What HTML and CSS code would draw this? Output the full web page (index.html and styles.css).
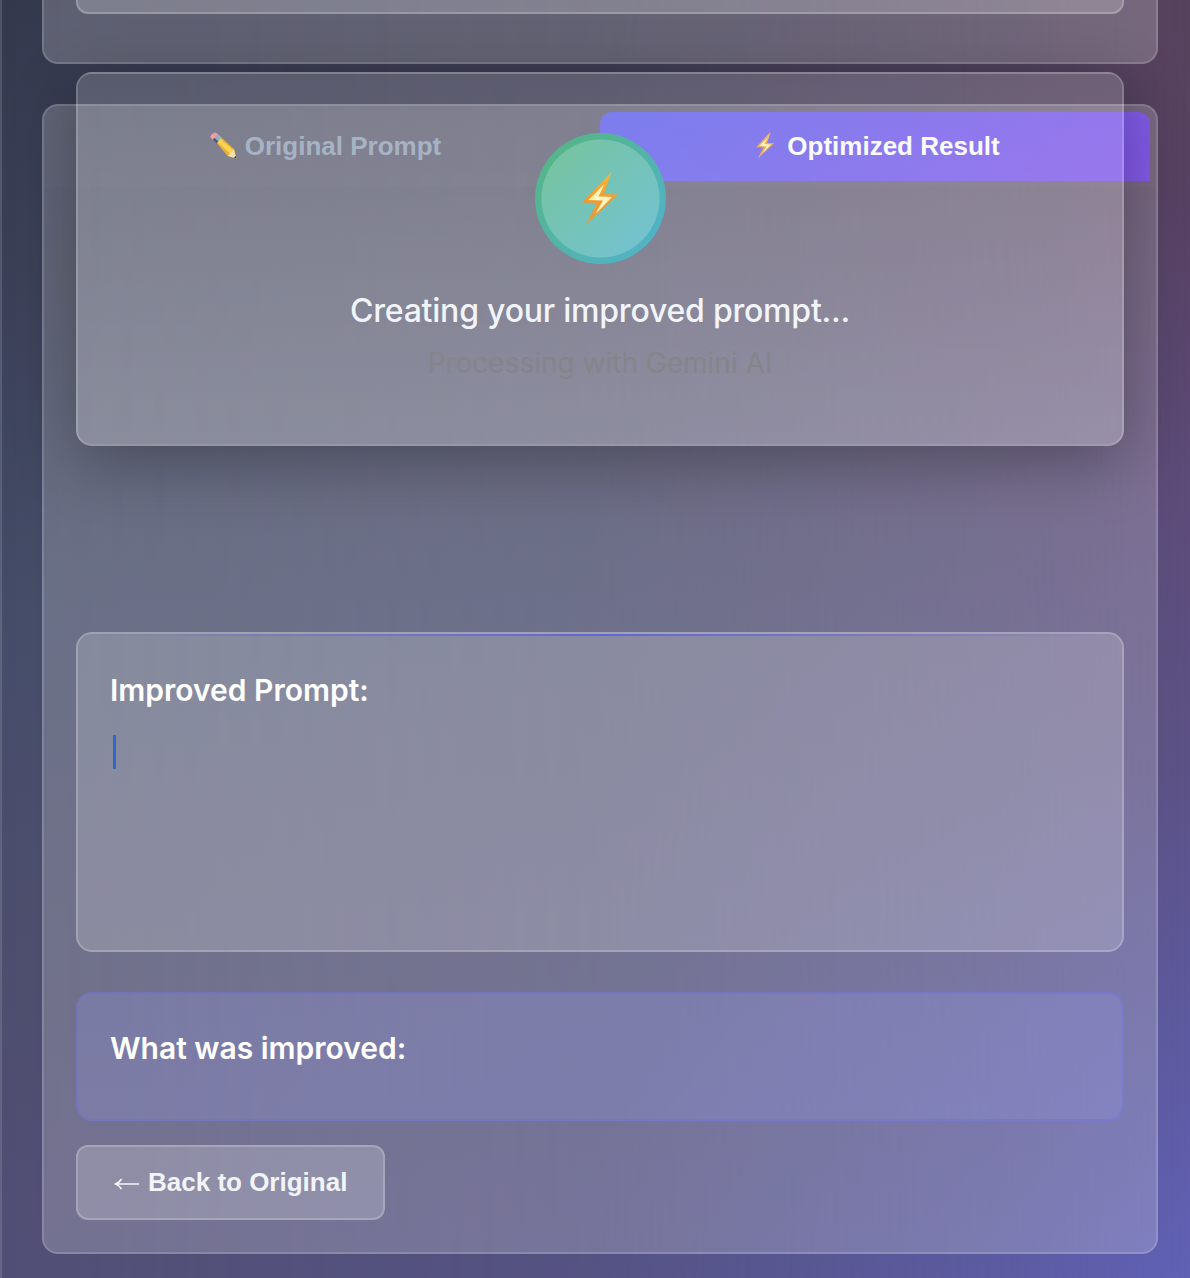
FILE: index.html
```html
<!DOCTYPE html>
<html lang="en">
<head>
<meta charset="utf-8">
<title>Prompt Optimizer</title>
<link rel="stylesheet" href="styles.css">
</head>
<body>
<svg width="0" height="0" class="defs" aria-hidden="true">
  <defs>
    <linearGradient id="bolt-edge" x1="0" y1="0" x2="0" y2="1">
      <stop offset="0" stop-color="#f5b83d"/><stop offset=".55" stop-color="#f09a32"/><stop offset="1" stop-color="#dca044"/>
    </linearGradient>
    <linearGradient id="bolt-core" x1="0" y1="0" x2="1" y2="1">
      <stop offset="0" stop-color="#ffd84a"/><stop offset=".45" stop-color="#fffbd2"/><stop offset="1" stop-color="#ffe88a"/>
    </linearGradient>
    <symbol id="bolt" viewBox="0 0 38 54">
      <path d="M30.500 0 1 30.500l15 .5L4.500 53 37.500 22.500 23 22z" fill="url(#bolt-edge)"/>
      <path d="M23.500 12 7.500 28l14.500.5-8 14L31 25l-13.500-.5z" fill="url(#bolt-core)"/>
    </symbol>
    <symbol id="pencil" viewBox="0 0 28 28">
      <path d="M6.500 9.500 10.500 3.800 25.500 17.500 27.500 26.500 18.500 24z" fill="#e0a010"/>
      <path d="m7.500 9 2.500-3.500L25 19l-3 3.500z" fill="#fccb2c"/>
      <path d="m19 24 5.500-6.800 3 9.300z" fill="#f0d9a8"/>
      <path d="m25 25.700 1.700-2 .8 2.800z" fill="#111"/>
      <path d="m3.500 6.500 4.800-5 4.200 4-5 5.500z" fill="#7f9cc0"/>
      <path d="m4 7.500 3.500 3.800 1.800-2-3.800-3.300z" fill="#2e3244"/>
      <path d="M1.500 5.800C.2 4.200 4.500.2 6.500.4l2.200 1.800-5 5.200z" fill="#f08a8c"/>
    </symbol>
  </defs>
</svg>
<main class="page">
  <section class="card card-top"><div class="field"></div></section>

  <section class="card card-result">
    <nav class="tabs">
      <button class="tab"><svg class="ico-pencil"><use href="#pencil"/></svg><span>Original Prompt</span></button>
      <button class="tab tab-active"><svg class="ico-bolt"><use href="#bolt"/></svg><span>Optimized Result</span></button>
    </nav>
    <div class="content">
      <div class="panel improved">
        <h3>Improved Prompt:</h3>
        <div class="cursor"></div>
      </div>
      <div class="panel changes"><h3>What was improved:</h3></div>
      <button class="back">
        <svg class="arrow" viewBox="0 0 26 14"><path d="M25 7H2M7.500 2Q5.500 5.500 1.500 7 5.500 8.500 7.500 12"/></svg><span>Back to Original</span>
      </button>
    </div>
  </section>

  <div class="loading">
    <div class="badge"><svg><use href="#bolt"/></svg></div>
    <p class="status">Creating your improved prompt...</p>
    <p class="sub">Processing with Gemini AI</p>
  </div>
</main>
</body>
</html>
```
FILE: styles.css
```css
* { box-sizing: border-box; }
html, body { margin: 0; height: 1278px; overflow: hidden; }
body {
  font-family: Inter, "Liberation Sans", sans-serif;
  background: linear-gradient(#35394e, #3b4057 20%, #454d69 48%, #4d4e6d 72%, #524f76);
}
body::before {
  content: "";
  position: absolute;
  inset: 0;
  background: linear-gradient(#57435d, #584263 15%, #5d4b79 38%, #5c5286 60%, #5d589a 76%, #6161b6);
  mask-image: linear-gradient(to right, transparent, rgba(0,0,0,.22) 50%, rgba(0,0,0,.7) 85%, #000);
}
.defs { position: absolute; }
h3, p { margin: 0; }
button { border: 0; background: none; font-family: "Liberation Sans", Arial, sans-serif; font-weight: 700; font-size: 26px; line-height: 30px; }
.page {
  position: relative;
  height: 1278px;
  padding: 0 32px 0 40px;
  border-left: 2px solid rgba(255,255,255,.13);
}
.card {
  border: 2px solid rgba(255,255,255,.15);
  border-radius: 16px;
  background: rgba(255,255,255,.2);
}
.card-top { height: 64px; padding: 0 32px; border-top: 0; border-radius: 0 0 16px 16px; }
.field {
  height: 14px;
  border: 2px solid rgba(255,255,255,.2);
  border-top: 0;
  border-radius: 0 0 12px 12px;
  background: rgba(255,255,255,.2);
}
.card-result { height: 1150px; margin-top: 40px; }
.tabs { display: flex; height: 81px; padding: 6px; background: rgba(255,255,255,.015); }
.tab { width: 50%; display: flex; align-items: center; justify-content: center; height: 69px; padding: 0 0 2px; color: #94a3b8; }
.tab-active { padding-left: 4px; color: #f8fafc; border-radius: 12px 12px 0 0; background: linear-gradient(135deg, #6163eb, #8459e8); }
.ico-pencil { width: 28px; height: 28px; margin-right: 8px; }
.ico-bolt { width: 22px; height: 27px; margin: 0 11px 0 0; }
.content { padding: 445px 32px 0; }
.panel { border: 2px solid rgba(255,255,255,.2); border-radius: 16px; background: rgba(255,255,255,.19); padding: 38px 32px; }
.panel h3 { color: #fff; font-size: 30px; line-height: 36px; font-weight: 600; }
.improved { position: relative; height: 320px; }
.improved::before {
  content: "";
  position: absolute;
  top: 0; left: 0; right: 0;
  height: 2px;
  background: linear-gradient(90deg, transparent, #6366d8, transparent);
}
.cursor { width: 3px; height: 34px; margin: 27px 0 0 3px; background: #3169c7; }
.changes { height: 129px; margin-top: 40px; padding-top: 36px; background: rgba(153,155,236,.25); border-color: rgba(99,102,241,.3); }
.back {
  display: flex;
  align-items: center;
  width: 309px;
  height: 75px;
  margin-top: 24px;
  padding: 0 36px 2px;
  color: #f1f5f9;
  border: 2px solid rgba(255,255,255,.2);
  border-radius: 12px;
  background: rgba(255,255,255,.2);
  white-space: nowrap;
}
.arrow { flex: none; width: 26px; height: 14px; margin: 5px 8px 0 0; fill: none; stroke: #f1f5f9; stroke-width: 1.600; }
/* Progress dialog floats above both cards */
.loading {
  position: absolute;
  left: 74px;
  top: 72px;
  width: 1048px;
  height: 374px;
  padding-top: 59px;
  display: flex;
  flex-direction: column;
  align-items: center;
  border: 2px solid rgba(255,255,255,.17);
  border-radius: 16px;
  background: linear-gradient(rgba(255,255,255,.165), rgba(255,255,255,.23));
  box-shadow: 0 16px 64px rgba(0,0,0,.3);
}
.badge {
  display: grid;
  place-items: center;
  width: 131px;
  height: 131px;
  border-radius: 50%;
  background: radial-gradient(circle, rgba(255,255,255,.2) 58.5px, transparent 59.5px), linear-gradient(135deg, #55b57e, #50b3d0);
}
.badge svg { width: 38px; height: 54px; }
.status { margin-top: 26px; color: #f1f5f9; font-size: 32px; line-height: 42px; font-weight: 500; letter-spacing: -.22px; }
.sub { margin-top: 12px; color: #84858a; font-size: 28px; line-height: 38px; }
```
